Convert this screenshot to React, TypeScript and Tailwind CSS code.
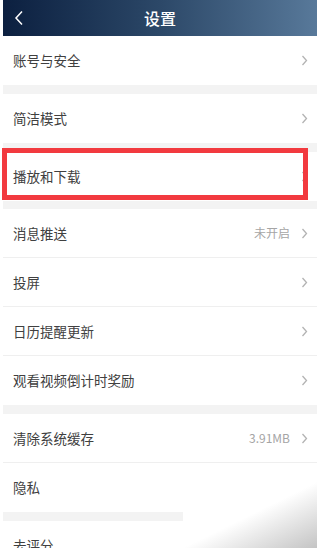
import React from 'react'

const font = { fontFamily: '"Noto Sans CJK SC", "Noto Sans", sans-serif' }

function Chevron() {
  return (
    <svg width="7" height="11" viewBox="0 0 7 11" className="shrink-0">
      <polyline points="1.5,1 5.5,5.5 1.5,10" fill="none" stroke="#b3b3b3" strokeWidth="1.3" />
    </svg>
  )
}

type RowProps = { label: string; value?: string; arrow?: boolean; divider?: boolean }

function Row({ label, value, arrow = true, divider = false }: RowProps) {
  return (
    <div className={`h-[49px] flex items-center bg-white pl-[10px] pr-[9px] ${divider ? 'border-b border-[#efefef]' : ''}`}>
      <span className="flex-1 text-[13.5px] text-[#404040]">{label}</span>
      {value && <span className="text-[12px] text-[#a5a5a5] mr-[11px]">{value}</span>}
      {arrow && <Chevron />}
    </div>
  )
}

export default function App() {
  return (
    <div className="relative w-[317px] h-[548px] overflow-hidden bg-white pl-[3px]" style={font}>
      <div className="bg-[#f3f3f3] h-full">
        <div className="h-[36px] relative flex items-center justify-center bg-gradient-to-r from-[#0c2040] via-[#2c4868] to-[#58799a]">
          <svg width="10" height="16" viewBox="0 0 10 16" className="absolute left-[11px] top-[10px]">
            <polyline points="8,1.5 2,8 8,14.5" fill="none" stroke="#ffffff" strokeWidth="1.5" />
          </svg>
          <span className="text-white text-[16px] font-medium">设置</span>
        </div>

        <Row label="账号与安全" />
        <div className="h-[9px]" />
        <Row label="简洁模式" />
        <div className="h-[9px]" />
        <div className="relative">
          <Row label="播放和下载" />
          <div className="absolute left-[-1px] right-[9px] top-[-4px] bottom-[1px] border-[5px] border-[#f23a3f]" />
        </div>
        <div className="h-[8px]" />
        <Row label="消息推送" value="未开启" divider />
        <Row label="投屏" divider />
        <Row label="日历提醒更新" divider />
        <Row label="观看视频倒计时奖励" />
        <div className="h-[9px]" />
        <Row label="清除系统缓存" value="3.91MB" divider />
        <Row label="隐私" arrow={false} />
        <div className="h-[9px]" />
        <Row label="去评分" arrow={false} />
      </div>
      <div className="absolute left-[183px] top-[482px] w-[134px] h-[66px] bg-gradient-to-br from-white via-white to-[#c4c4c4]" />
    </div>
  )
}
